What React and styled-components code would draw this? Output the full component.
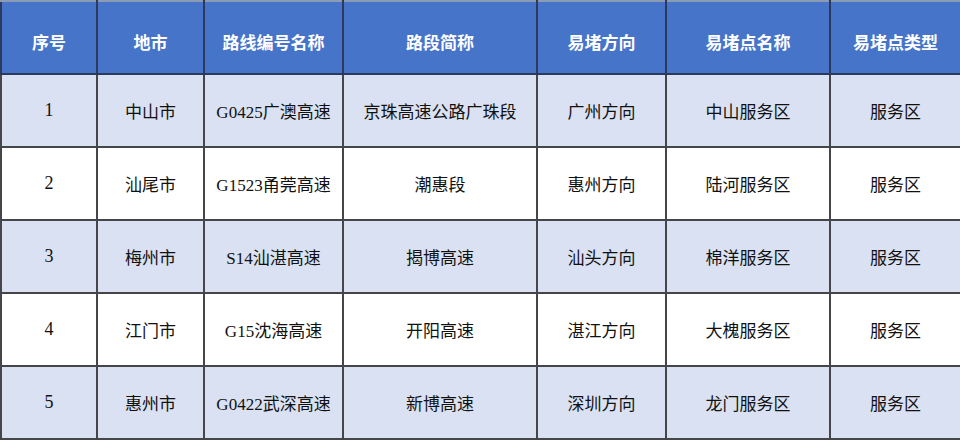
import styled, { createGlobalStyle } from "styled-components";

const GlobalStyle = createGlobalStyle`
  html, body {
    margin: 0;
    padding: 0;
    background: #ffffff;
  }
`;

const columns = [
  { title: "序号", width: 96 },
  { title: "地市", width: 107 },
  { title: "路线编号名称", width: 139 },
  { title: "路段简称", width: 194 },
  { title: "易堵方向", width: 129 },
  { title: "易堵点名称", width: 164 },
  { title: "易堵点类型", width: 131 },
];

const rows = [
  ["1", "中山市", "G0425广澳高速", "京珠高速公路广珠段", "广州方向", "中山服务区", "服务区"],
  ["2", "汕尾市", "G1523甬莞高速", "潮惠段", "惠州方向", "陆河服务区", "服务区"],
  ["3", "梅州市", "S14汕湛高速", "揭博高速", "汕头方向", "棉洋服务区", "服务区"],
  ["4", "江门市", "G15沈海高速", "开阳高速", "湛江方向", "大槐服务区", "服务区"],
  ["5", "惠州市", "G0422武深高速", "新博高速", "深圳方向", "龙门服务区", "服务区"],
];

const Table = styled.table`
  width: 960px;
  table-layout: fixed;
  border-collapse: collapse;
  font-family: "Liberation Serif", "Noto Sans CJK SC", serif;
  font-size: 17px;
  color: #111111;
`;

const HeadCell = styled.th`
  height: 64px;
  padding: 7px 4px 0;
  background: #4674c9;
  color: #ffffff;
  font-family: "Noto Sans CJK SC", sans-serif;
  font-weight: 600;
  font-size: 17px;
  text-align: center;
  border: 2px solid #2b3a5c;
  border-top-color: #8c9bb5;
`;

const Row = styled.tr`
  background: ${(p) => (p.$striped ? "#d9e1f2" : "#ffffff")};
`;

const Cell = styled.td`
  height: 71px;
  padding: 0 4px;
  text-align: center;
  vertical-align: middle;
  border: 2px solid #444649;
  white-space: nowrap;
  font-size: ${(p) => (p.$num ? "18px" : "17px")};
`;

export default function App() {
  return (
    <>
      <GlobalStyle />
      <Table>
        <colgroup>
          {columns.map((c) => (
            <col key={c.title} style={{ width: c.width }} />
          ))}
        </colgroup>
        <thead>
          <tr>
            {columns.map((c) => (
              <HeadCell key={c.title}>{c.title}</HeadCell>
            ))}
          </tr>
        </thead>
        <tbody>
          {rows.map((r, i) => (
            <Row key={r[0]} $striped={i % 2 === 0}>
              {r.map((v, j) => (
                <Cell key={j} $num={j === 0}>
                  {v}
                </Cell>
              ))}
            </Row>
          ))}
        </tbody>
      </Table>
    </>
  );
}
